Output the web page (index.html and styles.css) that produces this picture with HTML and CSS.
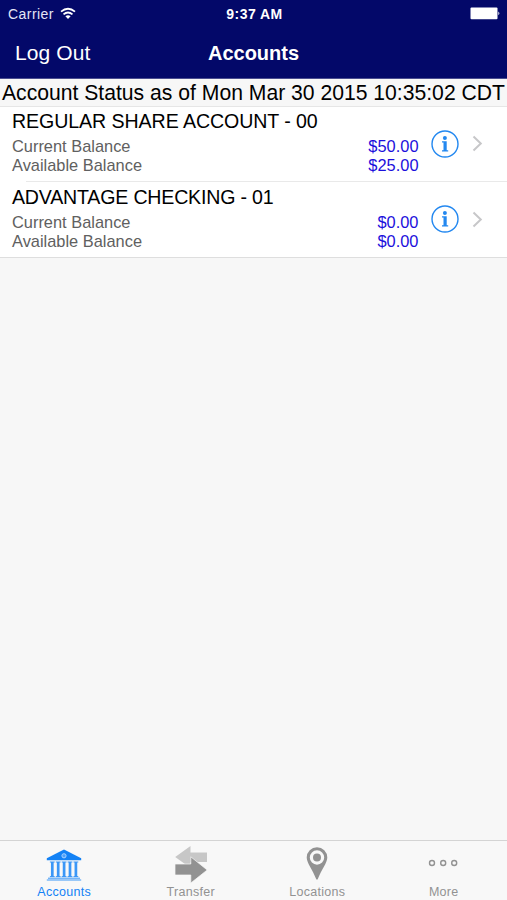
FILE: index.html
```html
<!DOCTYPE html>
<html lang="en">
<head>
<meta charset="utf-8">
<title>Accounts</title>
<link rel="stylesheet" href="styles.css">
</head>
<body>
<header>
  <div class="status">
    <div class="carrier"><span>Carrier</span>
      <svg width="16" height="13" viewBox="0 0 16 13" fill="none" stroke="#fff" stroke-width="1.8"><path d="M1 4.6Q8-1.2 15 4.6M3.5 7.4Q8 3.6 12.5 7.4"/><path d="M5.4 9.2Q8 7.2 10.6 9.2L8 12Z" fill="#fff" stroke="none"/></svg>
    </div>
    <div class="time">9:37 AM</div>
    <svg class="battery" width="31" height="13" viewBox="0 0 31 13" fill="#fff"><rect x=".5" y=".5" width="27" height="11.8" rx="1"/><path d="M28.4 4.5Q30.3 6.4 28.4 8.3Z"/></svg>
  </div>
  <nav class="bar"><span class="logout">Log Out</span><h1>Accounts</h1></nav>
</header>
<div class="asof">Account Status as of Mon Mar 30 2015 10:35:02 CDT</div>
<main>
  <section class="account">
    <div class="details">
      <h2 class="name">REGULAR SHARE ACCOUNT - 00</h2>
      <div class="line"><span>Current Balance</span><b>$50.00</b></div>
      <div class="line"><span>Available Balance</span><b>$25.00</b></div>
    </div>
    <svg class="info" width="28" height="28" viewBox="0 0 28 28"><circle cx="14" cy="14" r="13" fill="none" stroke="#2388f0" stroke-width="1.4"/><g fill="#2388f0"><circle cx="13.9" cy="7.9" r="2"/><path d="M11 11.2H15.700V20.200H17.200V21.500H11V20.200H12.500V12.500H11Z"/></g></svg>
    <svg class="chevron" width="11" height="17" viewBox="0 0 11 17"><path d="M1.5 1.5L8.8 8.5L1.5 15.5" fill="none" stroke="#c7c7c9" stroke-width="2"/></svg>
  </section>
  <section class="account second">
    <div class="details">
      <h2 class="name checking">ADVANTAGE CHECKING - 01</h2>
      <div class="line"><span>Current Balance</span><b>$0.00</b></div>
      <div class="line"><span>Available Balance</span><b>$0.00</b></div>
    </div>
    <svg class="info" width="28" height="28" viewBox="0 0 28 28"><circle cx="14" cy="14" r="13" fill="none" stroke="#2388f0" stroke-width="1.4"/><g fill="#2388f0"><circle cx="13.9" cy="7.9" r="2"/><path d="M11 11.2H15.700V20.200H17.200V21.500H11V20.200H12.500V12.500H11Z"/></g></svg>
    <svg class="chevron" width="11" height="17" viewBox="0 0 11 17"><path d="M1.5 1.5L8.8 8.5L1.5 15.5" fill="none" stroke="#c7c7c9" stroke-width="2"/></svg>
  </section>
</main>
<footer>
  <div class="tab active">
    <svg width="36" height="36" viewBox="0 0 36 36"><path d="M18 3.5L35.2 12.3V14.3H.8V12.3Z" fill="#1482f5"/><g fill="none" stroke="#3b97f7"><path d="M6.300 16V31M12.200 16V31M18.100 16V31M24 16V31M29.900 16V31" stroke-width="2.700"/><path d="M3.900 16h4.800M9.800 16h4.800M15.700 16h4.800M21.600 16h4.800M27.500 16h4.800M3.900 30.600h4.800M9.800 30.600h4.800M15.700 30.600h4.800M21.600 30.600h4.800M27.500 30.600h4.800"/><path d="M2 32.200h32M.8 34h34.400"/></g><circle cx="18" cy="9.800" r="2.100" fill="#4ba0fa" stroke="#a9d2ff"/></svg>
    <span>Accounts</span>
  </div>
  <div class="tab">
    <svg width="36" height="36" viewBox="0 0 36 36"><path d="M2.200 11L17.500 0V6.500H34V16H17.500V22Z" fill="#c7c7c7"/><path d="M2 18H17.800V10.800L34.200 24L17.800 37V29H2Z" fill="#929292" stroke="#f8f8f8" stroke-width=".7"/></svg>
    <span>Transfer</span>
  </div>
  <div class="tab">
    <svg width="36" height="36" viewBox="0 0 36 36"><path fill="#929292" fill-rule="evenodd" d="M18 1.200A10.300 10.300 0 0 1 28.300 11.500C28.300 17 22.500 23.500 18.600 33.500H17.400C13.500 23.500 7.700 17 7.700 11.500A10.300 10.300 0 0 1 18 1.200ZM18 4.300A7.200 7.200 0 1 0 18 18.700A7.200 7.200 0 1 0 18 4.300Z"/><circle cx="18" cy="11.500" r="4" fill="#929292"/></svg>
    <span>Locations</span>
  </div>
  <div class="tab">
    <svg width="36" height="36" viewBox="0 0 36 36" fill="none" stroke="#929292" stroke-width="1.400"><circle cx="6" cy="17" r="2.500"/><circle cx="17.200" cy="17" r="2.500"/><circle cx="28.200" cy="17" r="2.500"/></svg>
    <span>More</span>
  </div>
</footer>
</body>
</html>
```
FILE: styles.css
```css
* { box-sizing: border-box; }
body {
  margin: 0;
  height: 900px;
  display: flex;
  flex-direction: column;
  overflow: hidden;
  background: #f7f7f7;
  color: #000;
  font-family: "Liberation Sans", Arial, sans-serif;
}
svg { display: block; flex: none; }
h1, h2 { margin: 0; }
header { height: 79px; background: #030869; color: #fff; flex: none; border-bottom: 1px solid #4a4d90; }
.status, .bar { display: grid; grid-template-columns: 1fr auto 1fr; align-items: center; }
.status { height: 27px; padding: 0 6px 0 8px; font-size: 14px; }
.carrier { display: flex; align-items: center; gap: 6px; letter-spacing: .45px; color: #e4e5f5; }
.time { font-weight: bold; letter-spacing: .45px; }
.battery { justify-self: end; }
.bar { height: 51px; padding: 0 15px; }
.logout { font-size: 21px; letter-spacing: .1px; }
h1 { font-size: 20px; line-height: 24px; }
.asof {
  height: 28px;
  flex: none;
  padding-left: 2px;
  border-bottom: 1px solid #e6e6e6;
  font-size: 21.150px;
  line-height: 28px;
  white-space: nowrap;
}
main { background: #fff; border-bottom: 1px solid #dedede; }
.account { height: 74px; display: flex; padding: 3px 24px 0 12px; }
.second { height: 76px; padding-top: 5px; position: relative; }
.second::before { content: ""; position: absolute; top: 0; left: 26px; right: 0; height: 1px; background: #e9e9e9; }
.details { width: 406.500px; }
.name { font-size: 19.600px; font-weight: normal; line-height: 23px; margin-bottom: 4px; white-space: nowrap; letter-spacing: -.08px; }
.checking { letter-spacing: -.2px; }
.line { display: flex; justify-content: space-between; font-size: 16.400px; line-height: 18.500px; color: #606060; }
.line b { font-weight: normal; color: #1c0fdc; }
.info { margin: 20px 0 0 12px; }
.chevron { margin: 25px 0 0 13.500px; }
.second .info { margin-top: 19px; }
footer { height: 60px; margin-top: auto; border-top: 1px solid #d4d4d4; background: #f8f8f8; display: grid; grid-template-columns: repeat(4, 126.500px); padding-left: 1px; }
.tab { display: flex; flex-direction: column; align-items: center; padding-top: 5px; font-size: 12.500px; letter-spacing: .3px; line-height: 14px; color: #929292; }
.tab svg { overflow: visible; }
.tab span { margin-top: 3px; }
.active { color: #1482f5; }
```
